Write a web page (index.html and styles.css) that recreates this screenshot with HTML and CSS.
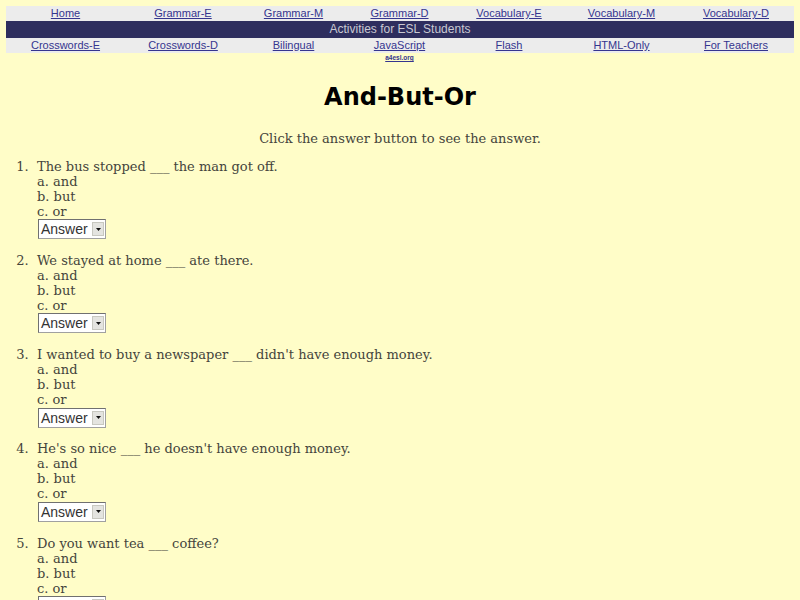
FILE: index.html
```html
<!DOCTYPE html>
<html>
<head>
<meta charset="utf-8">
<title>And-But-Or</title>
<link rel="stylesheet" href="styles.css">
</head>
<body>
<nav class="nav">
  <div class="cell"><a href="#">Home</a></div>
  <div class="cell"><a href="#">Grammar-E</a></div>
  <div class="cell"><a href="#">Grammar-M</a></div>
  <div class="cell"><a href="#">Grammar-D</a></div>
  <div class="cell"><a href="#">Vocabulary-E</a></div>
  <div class="cell"><a href="#">Vocabulary-M</a></div>
  <div class="cell"><a href="#">Vocabulary-D</a></div>
  <div class="banner">Activities for ESL Students</div>
  <div class="cell"><a href="#">Crosswords-E</a></div>
  <div class="cell"><a href="#">Crosswords-D</a></div>
  <div class="cell"><a href="#">Bilingual</a></div>
  <div class="cell"><a href="#">JavaScript</a></div>
  <div class="cell"><a href="#">Flash</a></div>
  <div class="cell"><a href="#">HTML-Only</a></div>
  <div class="cell"><a href="#">For Teachers</a></div>
  <div class="sub"></div>
  <div class="sub"></div>
  <div class="sub"></div>
  <div class="sub"><a href="#">a4esl.org</a></div>
</nav>

<h1 class="title">And-But-Or</h1>
<p class="intro">Click the answer button to see the answer.</p>

<ol class="quiz">
  <li>The bus stopped ___ the man got off.<br>a. and<br>b. but<br>c. or
    <div class="answer"><span class="label">Answer</span><span class="arrow"><svg width="5" height="3" viewBox="0 0 5 3"><path d="M0 0H5L2.5 3Z" fill="#111"/></svg></span></div></li>
  <li>We stayed at home ___ ate there.<br>a. and<br>b. but<br>c. or
    <div class="answer"><span class="label">Answer</span><span class="arrow"><svg width="5" height="3" viewBox="0 0 5 3"><path d="M0 0H5L2.5 3Z" fill="#111"/></svg></span></div></li>
  <li>I wanted to buy a newspaper ___ didn't have enough money.<br>a. and<br>b. but<br>c. or
    <div class="answer"><span class="label">Answer</span><span class="arrow"><svg width="5" height="3" viewBox="0 0 5 3"><path d="M0 0H5L2.5 3Z" fill="#111"/></svg></span></div></li>
  <li>He's so nice ___ he doesn't have enough money.<br>a. and<br>b. but<br>c. or
    <div class="answer"><span class="label">Answer</span><span class="arrow"><svg width="5" height="3" viewBox="0 0 5 3"><path d="M0 0H5L2.5 3Z" fill="#111"/></svg></span></div></li>
  <li>Do you want tea ___ coffee?<br>a. and<br>b. but<br>c. or
    <div class="answer"><span class="label">Answer</span><span class="arrow"><svg width="5" height="3" viewBox="0 0 5 3"><path d="M0 0H5L2.5 3Z" fill="#111"/></svg></span></div></li>
</ol>
</body>
</html>
```
FILE: styles.css
```css
html, body {
  background: #fffdc8;
}
body {
  margin: 6px;
  color: #44443c;
  font-family: "DejaVu Serif", serif;
  font-size: 13px;
}
.nav {
  display: grid;
  grid-template-columns: 119fr 116fr 105fr 107fr 112fr 113fr 116fr;
  grid-template-rows: 15px 17px 15px 9px;
  font-family: "Liberation Sans", Arial, sans-serif;
  font-size: 11px;
}
.cell {
  background: #ececec;
  text-align: center;
  line-height: 15px;
}
.cell a {
  color: #35358f;
}
.banner {
  grid-column: 1 / -1;
  background: #2e2e5e;
  color: #c9c9d2;
  text-align: center;
  font-size: 12px;
  line-height: 17px;
}
.sub {
  text-align: center;
  font-size: 6.5px;
  line-height: 9px;
  font-weight: bold;
}
.sub a {
  color: #35358f;
}
.title {
  margin: 21px 0 0;
  text-align: center;
  font-family: "DejaVu Sans", sans-serif;
  font-weight: bold;
  font-size: 24px;
  line-height: 28px;
  color: #000;
}
.intro {
  margin: 19.5px 0 0;
  text-align: center;
  line-height: 15px;
}
.quiz {
  margin: 13px 0 0;
  padding-left: 31px;
  line-height: 15px;
}
.quiz li {
  margin-bottom: 13.8px;
}
.quiz li::marker {
  content: counter(list-item) ".  ";
}
.answer {
  display: flex;
  align-items: center;
  width: 66px;
  height: 18px;
  margin-top: 0.5px;
  margin-left: 1px;
  background: #fff;
  border: 1px solid #a0a0a0;
  border-top-color: #707070;
  border-left-color: #707070;
  font-family: "Liberation Sans", Arial, sans-serif;
  font-size: 14px;
  color: #333;
}
.label {
  flex: 1;
  padding-left: 2px;
  line-height: 18px;
}
.arrow {
  display: flex;
  align-items: center;
  justify-content: center;
  width: 12px;
  height: 14px;
  margin-right: 1px;
  background: #e4e4e0;
  border: 1px solid #c8c8c0;
  box-sizing: border-box;
}
```
